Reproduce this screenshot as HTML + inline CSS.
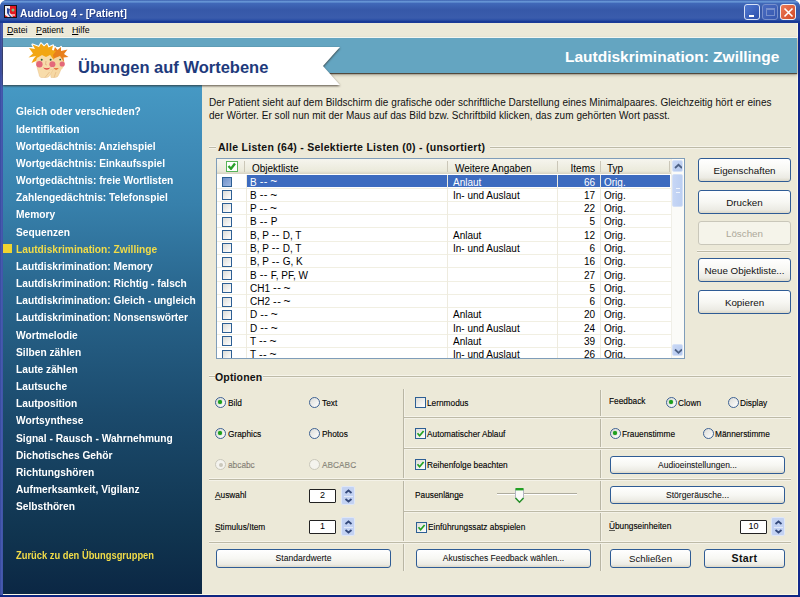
<!DOCTYPE html>
<html><head><meta charset="utf-8">
<style>
*{box-sizing:border-box;margin:0;padding:0}
html,body{width:800px;height:597px;overflow:hidden;background:#fff}
body{position:relative;font-family:"Liberation Sans",sans-serif;font-size:10px;color:#000}
.a{position:absolute;white-space:nowrap}
#frame{left:0;top:0;width:800px;height:597px;background:#1a44ae;border-radius:7px 7px 0 0}
#title{left:0;top:0;width:800px;height:23px;border-radius:7px 7px 0 0;background:linear-gradient(#3a5fae 0,#6b9bd9 1.7px,#4068b8 3.5px,#3658a8 10px,#3a5cac 18px,#2c50a6 20px,#183a96 21.5px,#1a3a98 23px)}
#ttext{left:19.5px;top:7px;font-weight:bold;font-size:11px;color:#fff;text-shadow:1px 1px 0 rgba(20,40,110,.7);transform:scaleX(0.935);transform-origin:0 0}
#client{left:3px;top:23px;width:794.5px;height:572px;background:#ece9d8;border-right:1px solid #fbf8e4;border-bottom:1.5px solid #fbf8e4}
.mi{top:24.6px;font-size:8.8px;color:#000}
.mi u{text-decoration:underline;text-underline-offset:1px;text-decoration-skip-ink:none}
.bar{left:3px;top:37px;width:794px;height:36px;background:#64a5c1;border-top:1px solid #f4f6f0;box-shadow:0 1px 1px rgba(50,40,30,.75),0 2px 3px rgba(50,40,30,.35)}
.nav{left:3px;top:85px;width:199px;height:509px;background:linear-gradient(#4699c4 0,#3f8cb8 60px,#3780ab 120px,#2a6890 200px,#1b4a6c 330px,#10344f 450px,#0b2744 509px)}
.nv{left:15.5px;font-weight:bold;font-size:11.5px;color:#fff;transform:scaleX(0.888);transform-origin:0 0;line-height:14px}
.gl{height:3px;margin-top:-1px;border-top:1px solid #f6f4ea;border-bottom:1px solid #f4f2e8;background:#bdbaa7}
.vl{width:2px;background:#b9b6a4;border-right:1px solid #f3f1e6}
.btn{height:19px;border:1px solid #2f5c95;color:#111;border-radius:3px;background:linear-gradient(#fff 0,#f7f7f3 50%,#ecebe4 85%,#dcd8c8 100%);text-align:center;line-height:17px;font-size:10px}
.cb{width:11px;height:11px;border:1px solid #2d5f94;background:linear-gradient(135deg,#dcdcd7 0,#fff 100%)}
.rb{width:11px;height:11px;border:1.4px solid #3f6394;border-radius:50%;background:linear-gradient(135deg,#dcdcd7 0,#fff 100%)}
.rb.on::after{content:"";position:absolute;left:2.3px;top:2.3px;width:4px;height:4px;border-radius:50%;background:#1f9f1f;box-shadow:0 0 1px #2a2}
.lbl u{text-decoration:underline;text-decoration-skip-ink:none;text-underline-offset:1px;text-decoration-thickness:1px}
.lbl{font-size:8.3px;line-height:12px;color:#000;-webkit-text-stroke:0.2px rgba(0,0,0,.6)}
.row{height:13px;line-height:13px;font-size:10px;margin-top:0.7px}
.dd{font-size:11px;letter-spacing:0.4px;margin-left:0.3px;position:relative;top:-0.6px}
.tl{font-size:12px;position:relative;top:-0.2px;margin-left:-0.5px}
</style></head><body>
<div id="frame" class="a"></div>
<div class="a" style="left:0;top:20px;width:2.6px;height:577px;background:linear-gradient(90deg,#34489e,#4a5cb0 60%,#3a52a6)"></div>
<div class="a" style="left:797.5px;top:20px;width:2.5px;height:577px;background:#12298c"></div>
<div class="a" style="left:0;top:594.5px;width:800px;height:3px;background:#0e2682"></div>
<div id="title" class="a">
<svg class="a" style="left:4px;top:5px" width="13" height="13"><rect x="0.5" y="0.5" width="12" height="12" fill="#f2f0f4" stroke="#151520"/><path d="M6 1H12V12H9L6 8Z" fill="#e41820"/><path d="M1 10L4 12H1Z" fill="#e41820"/><path d="M3 3L6 4L5 9L8 12H6L3 8Z" fill="#3048a0"/><circle cx="9" cy="5" r="1.5" fill="#80c080"/><path d="M7 10H11" stroke="#f4f4f4" stroke-width="1.2"/></svg>
<div id="ttext" class="a">AudioLog 4 - [Patient]</div>
<div class="a" style="left:744px;top:4px;width:16px;height:16px;border:1px solid #d8e2f6;border-radius:3px;background:linear-gradient(135deg,#5078d0,#2c50ac)"><div class="a" style="left:3.5px;top:9.5px;width:5.5px;height:2.5px;background:#fff"></div></div>
<div class="a" style="left:762px;top:4px;width:16px;height:16px;border:1px solid #7890cc;border-radius:3px;background:linear-gradient(135deg,#4a6cc0,#3658b0)"><div class="a" style="left:3px;top:3px;width:9px;height:8px;border:1px solid #7890cc;border-top-width:2px"></div></div>
<div class="a" style="left:780px;top:4px;width:16px;height:16px;border:1px solid #f0f0f4;border-radius:3px;background:linear-gradient(135deg,#ec7a58,#d24a26)"><svg class="a" style="left:2px;top:2px" width="11" height="11"><path d="M1.5 1.5L9.5 9.5M9.5 1.5L1.5 9.5" stroke="#fff" stroke-width="1.6"/></svg></div>
</div>
<div id="client" class="a"></div>
<div class="a mi" style="left:7px"><u>D</u>atei</div>
<div class="a mi" style="left:36px"><u>P</u>atient</div>
<div class="a mi" style="left:72px"><u>H</u>ilfe</div>
<div class="a bar"></div>
<div class="a nav"></div>
<svg class="a" style="left:3px;top:45px;filter:drop-shadow(0 1px 1.2px rgba(40,30,20,.75))" width="350" height="48"><polygon points="0,2 337,2 320,21 337,40 0,40" fill="#fff"/></svg>
<svg class="a" style="left:20px;top:38px" width="56" height="48" viewBox="20 38 56 48"><g stroke="#fff" stroke-width="2.2" stroke-linejoin="round" fill="#fff"><path d="M53 53 L55 47 L57.5 50 L61 47 L61 51 L67.5 49.5 L64 54 L68.5 57 L63.5 57.5 L64 62 L52 60Z"/><path d="M36 56 L28.5 57.5 L33 53.5 L29 48 L35 49 L32.5 44.5 L39 47 L41 43.5 L44 46.5 L47 44 L48.5 47.5 L53 45.5 L52 50 L56 51 L53 55 L54 60 L36 61 L31.5 63 L33.5 59Z"/></g><path d="M50 68 Q57 72 62 67 L59 74 Q58 77.5 55 77.5 L51 77.5Z" fill="#f6d8a4" stroke="#e8c088" stroke-width="0.5"/><path d="M37 67 Q45 74 54 68 L50 75 Q49 77.5 46 77.5 L41 77.5 Q39 77 39 74Z" fill="#f8dcaa" stroke="#e8c088" stroke-width="0.5"/><ellipse cx="58" cy="62.5" rx="6.5" ry="8" fill="#f5d6a0"/><path d="M53 53 L55 47 L57.5 50 L61 47 L61 51 L67.5 49.5 L64 54 L68.5 57 L63.5 57.5 L64 62 L60 56 L55 58 L52 60Z" fill="#e8801c"/><circle cx="62.2" cy="64" r="2.6" fill="#e4687a"/><circle cx="60.2" cy="59.6" r="0.9" fill="#2a5a3a"/><path d="M53.5 67.8 Q56 71.5 58.8 68Q56 68.8 53.5 67.8Z" fill="#e25a20"/><ellipse cx="45" cy="62.5" rx="9.3" ry="9" fill="#f8dcaa"/><path d="M36 56 L28.5 57.5 L33 53.5 L29 48 L35 49 L32.5 44.5 L39 47 L41 43.5 L44 46.5 L47 44 L48.5 47.5 L53 45.5 L52 50 L56 51 L53 55 L54 60 L50 55 L46 57 L42 55 L37 58 L36 61 L31.5 63 L33.5 59Z" fill="#f2a614"/><circle cx="39.4" cy="64.2" r="3.2" fill="#e4687a"/><circle cx="52.4" cy="64.2" r="3" fill="#e4687a"/><circle cx="41.7" cy="59.8" r="1" fill="#2a5a3a"/><circle cx="50.6" cy="59.8" r="1" fill="#2a5a3a"/><path d="M43 67.5 Q46.8 72 50.5 67.5Q46.8 68.8 43 67.5Z" fill="#e04848"/><path d="M46 61 L45.5 64.5 L47 65" stroke="#d8a070" stroke-width="0.6" fill="none"/><path d="M45 77.5 L49.5 72 M54 77.5 L56 72" stroke="#e0b078" stroke-width="0.6"/></svg>
<div class="a" style="left:78px;top:58px;font-weight:bold;font-size:16.5px;color:#1e3a7c">Übungen auf Wortebene</div>
<div class="a" style="left:565px;top:48px;font-weight:bold;font-size:15.5px;color:#fff">Lautdiskrimination: Zwillinge</div>
<div class="a nv" style="top:104.35px">Gleich oder verschieden?</div>
<div class="a nv" style="top:121.52px">Identifikation</div>
<div class="a nv" style="top:138.69px">Wortgedächtnis: Anziehspiel</div>
<div class="a nv" style="top:155.86px">Wortgedächtnis: Einkaufsspiel</div>
<div class="a nv" style="top:173.03px">Wortgedächtnis: freie Wortlisten</div>
<div class="a nv" style="top:190.20px">Zahlengedächtnis: Telefonspiel</div>
<div class="a nv" style="top:207.37px">Memory</div>
<div class="a nv" style="top:224.54px">Sequenzen</div>
<div class="a nv" style="top:241.71px;color:#f2dc48">Lautdiskrimination: Zwillinge</div>
<div class="a nv" style="top:258.88px">Lautdiskrimination: Memory</div>
<div class="a nv" style="top:276.05px">Lautdiskrimination: Richtig - falsch</div>
<div class="a nv" style="top:293.22px">Lautdiskrimination: Gleich - ungleich</div>
<div class="a nv" style="top:310.39px">Lautdiskrimination: Nonsenswörter</div>
<div class="a nv" style="top:327.56px">Wortmelodie</div>
<div class="a nv" style="top:344.73px">Silben zählen</div>
<div class="a nv" style="top:361.90px">Laute zählen</div>
<div class="a nv" style="top:379.07px">Lautsuche</div>
<div class="a nv" style="top:396.24px">Lautposition</div>
<div class="a nv" style="top:413.41px">Wortsynthese</div>
<div class="a nv" style="top:430.58px">Signal - Rausch - Wahrnehmung</div>
<div class="a nv" style="top:447.75px">Dichotisches Gehör</div>
<div class="a nv" style="top:464.92px">Richtungshören</div>
<div class="a nv" style="top:482.09px">Aufmerksamkeit, Vigilanz</div>
<div class="a nv" style="top:499.26px">Selbsthören</div>
<div class="a" style="left:3px;top:244px;width:9px;height:9px;background:#f0d430"></div>
<div class="a nv" style="top:548.90px;color:#f2dc48;font-size:10px;transform:scaleX(0.934)">Zurück zu den Übungsgruppen</div>
<div class="a" style="left:209px;top:97px;font-size:10px;line-height:12.6px;letter-spacing:0.04px;color:#111">Der Patient sieht auf dem Bildschirm die grafische oder schriftliche Darstellung eines Minimalpaares. Gleichzeitig hört er eines<br>der Wörter. Er soll nun mit der Maus auf das Bild bzw. Schriftbild klicken, das zum gehörten Wort passt.</div>
<div class="a gl" style="left:209px;top:147px;width:7px"></div>
<div class="a gl" style="left:490px;top:147px;width:301px"></div>
<div class="a" style="left:218px;top:140.7px;font-weight:bold;font-size:10.5px;line-height:13px;letter-spacing:0.27px;color:#111">Alle Listen (64) - Selektierte Listen (0) - (unsortiert)</div>
<div class="a" style="left:216px;top:158px;width:469px;height:201px;border:1px solid #7f9db9;background:#fff"></div>
<div class="a" style="left:217px;top:159px;width:454px;height:15px;background:linear-gradient(#f6f5ee 0,#ebeadb 80%,#d6d2c2 100%)"></div>
<div class="a" style="left:244px;top:161px;width:1px;height:11px;background:#cbc7b8"></div>
<div class="a" style="left:447px;top:161px;width:1px;height:11px;background:#cbc7b8"></div>
<div class="a" style="left:557px;top:161px;width:1px;height:11px;background:#cbc7b8"></div>
<div class="a" style="left:600px;top:161px;width:1px;height:11px;background:#cbc7b8"></div>
<div class="a" style="left:669px;top:161px;width:1px;height:11px;background:#cbc7b8"></div>
<div class="a" style="left:226px;top:161px;width:12px;height:11px;border:1.5px solid #58b458;background:#fff"><svg class="a" style="left:0;top:0" width="9" height="8"><path d="M1.5 4L4 6.8L8 1.5" stroke="#2aa02a" stroke-width="2.3" fill="none"/></svg></div>
<div class="a row" style="left:252px;top:161px">Objektliste</div>
<div class="a row" style="left:455px;top:161px">Weitere Angaben</div>
<div class="a row" style="left:557px;top:161px;width:38px;text-align:right">Items</div>
<div class="a row" style="left:607px;top:161px">Typ</div>
<div class="a" style="left:217px;top:175px;width:454px;height:183px;overflow:hidden">
<div class="a" style="left:0;top:12.60px;width:454px;height:1px;background:#f1efe2"></div>
<div class="a" style="left:30px;top:-0.10px;width:200px;height:12.4px;background:#3d6bbf"></div>
<div class="a" style="left:231px;top:-0.10px;width:109px;height:12.4px;background:#3d6bbf"></div>
<div class="a" style="left:341px;top:-0.10px;width:42px;height:12.4px;background:#3d6bbf"></div>
<div class="a" style="left:384px;top:-0.10px;width:69px;height:12.4px;background:#3d6bbf"></div>
<div class="a cb" style="left:5px;top:1.90px;width:10px;height:10px;background:linear-gradient(135deg,#6f90c8,#a0b8e0);"></div>
<div class="a row" style="left:33px;top:-0.10px;color:#fff;">B <span class="dd">--</span> <span class="tl">~</span></div>
<div class="a row" style="left:236px;top:-0.10px;color:#fff;">Anlaut</div>
<div class="a row" style="left:340px;top:-0.10px;width:38px;text-align:right;color:#fff;">66</div>
<div class="a row" style="left:387px;top:-0.10px;color:#fff;">Orig.</div>
<div class="a" style="left:0;top:25.89px;width:454px;height:1px;background:#f1efe2"></div>
<div class="a cb" style="left:5px;top:15.19px;width:10px;height:10px;"></div>
<div class="a row" style="left:33px;top:13.19px;">B <span class="dd">--</span> <span class="tl">~</span></div>
<div class="a row" style="left:236px;top:13.19px;">In- und Auslaut</div>
<div class="a row" style="left:340px;top:13.19px;width:38px;text-align:right;">17</div>
<div class="a row" style="left:387px;top:13.19px;">Orig.</div>
<div class="a" style="left:0;top:39.18px;width:454px;height:1px;background:#f1efe2"></div>
<div class="a cb" style="left:5px;top:28.48px;width:10px;height:10px;"></div>
<div class="a row" style="left:33px;top:26.48px;">P <span class="dd">--</span> <span class="tl">~</span></div>
<div class="a row" style="left:340px;top:26.48px;width:38px;text-align:right;">22</div>
<div class="a row" style="left:387px;top:26.48px;">Orig.</div>
<div class="a" style="left:0;top:52.47px;width:454px;height:1px;background:#f1efe2"></div>
<div class="a cb" style="left:5px;top:41.77px;width:10px;height:10px;"></div>
<div class="a row" style="left:33px;top:39.77px;">B <span class="dd">--</span> P</div>
<div class="a row" style="left:340px;top:39.77px;width:38px;text-align:right;">5</div>
<div class="a row" style="left:387px;top:39.77px;">Orig.</div>
<div class="a" style="left:0;top:65.76px;width:454px;height:1px;background:#f1efe2"></div>
<div class="a cb" style="left:5px;top:55.06px;width:10px;height:10px;"></div>
<div class="a row" style="left:33px;top:53.06px;">B, P <span class="dd">--</span> D, T</div>
<div class="a row" style="left:236px;top:53.06px;">Anlaut</div>
<div class="a row" style="left:340px;top:53.06px;width:38px;text-align:right;">12</div>
<div class="a row" style="left:387px;top:53.06px;">Orig.</div>
<div class="a" style="left:0;top:79.05px;width:454px;height:1px;background:#f1efe2"></div>
<div class="a cb" style="left:5px;top:68.35px;width:10px;height:10px;"></div>
<div class="a row" style="left:33px;top:66.35px;">B, P <span class="dd">--</span> D, T</div>
<div class="a row" style="left:236px;top:66.35px;">In- und Auslaut</div>
<div class="a row" style="left:340px;top:66.35px;width:38px;text-align:right;">6</div>
<div class="a row" style="left:387px;top:66.35px;">Orig.</div>
<div class="a" style="left:0;top:92.34px;width:454px;height:1px;background:#f1efe2"></div>
<div class="a cb" style="left:5px;top:81.64px;width:10px;height:10px;"></div>
<div class="a row" style="left:33px;top:79.64px;">B, P <span class="dd">--</span> G, K</div>
<div class="a row" style="left:340px;top:79.64px;width:38px;text-align:right;">16</div>
<div class="a row" style="left:387px;top:79.64px;">Orig.</div>
<div class="a" style="left:0;top:105.63px;width:454px;height:1px;background:#f1efe2"></div>
<div class="a cb" style="left:5px;top:94.93px;width:10px;height:10px;"></div>
<div class="a row" style="left:33px;top:92.93px;">B <span class="dd">--</span> F, PF, W</div>
<div class="a row" style="left:340px;top:92.93px;width:38px;text-align:right;">27</div>
<div class="a row" style="left:387px;top:92.93px;">Orig.</div>
<div class="a" style="left:0;top:118.92px;width:454px;height:1px;background:#f1efe2"></div>
<div class="a cb" style="left:5px;top:108.22px;width:10px;height:10px;"></div>
<div class="a row" style="left:33px;top:106.22px;">CH1 <span class="dd">--</span> <span class="tl">~</span></div>
<div class="a row" style="left:340px;top:106.22px;width:38px;text-align:right;">5</div>
<div class="a row" style="left:387px;top:106.22px;">Orig.</div>
<div class="a" style="left:0;top:132.21px;width:454px;height:1px;background:#f1efe2"></div>
<div class="a cb" style="left:5px;top:121.51px;width:10px;height:10px;"></div>
<div class="a row" style="left:33px;top:119.51px;">CH2 <span class="dd">--</span> <span class="tl">~</span></div>
<div class="a row" style="left:340px;top:119.51px;width:38px;text-align:right;">6</div>
<div class="a row" style="left:387px;top:119.51px;">Orig.</div>
<div class="a" style="left:0;top:145.50px;width:454px;height:1px;background:#f1efe2"></div>
<div class="a cb" style="left:5px;top:134.80px;width:10px;height:10px;"></div>
<div class="a row" style="left:33px;top:132.80px;">D <span class="dd">--</span> <span class="tl">~</span></div>
<div class="a row" style="left:236px;top:132.80px;">Anlaut</div>
<div class="a row" style="left:340px;top:132.80px;width:38px;text-align:right;">20</div>
<div class="a row" style="left:387px;top:132.80px;">Orig.</div>
<div class="a" style="left:0;top:158.79px;width:454px;height:1px;background:#f1efe2"></div>
<div class="a cb" style="left:5px;top:148.09px;width:10px;height:10px;"></div>
<div class="a row" style="left:33px;top:146.09px;">D <span class="dd">--</span> <span class="tl">~</span></div>
<div class="a row" style="left:236px;top:146.09px;">In- und Auslaut</div>
<div class="a row" style="left:340px;top:146.09px;width:38px;text-align:right;">24</div>
<div class="a row" style="left:387px;top:146.09px;">Orig.</div>
<div class="a" style="left:0;top:172.08px;width:454px;height:1px;background:#f1efe2"></div>
<div class="a cb" style="left:5px;top:161.38px;width:10px;height:10px;"></div>
<div class="a row" style="left:33px;top:159.38px;">T <span class="dd">--</span> <span class="tl">~</span></div>
<div class="a row" style="left:236px;top:159.38px;">Anlaut</div>
<div class="a row" style="left:340px;top:159.38px;width:38px;text-align:right;">39</div>
<div class="a row" style="left:387px;top:159.38px;">Orig.</div>
<div class="a" style="left:0;top:185.37px;width:454px;height:1px;background:#f1efe2"></div>
<div class="a cb" style="left:5px;top:174.67px;width:10px;height:10px;"></div>
<div class="a row" style="left:33px;top:172.67px;">T <span class="dd">--</span> <span class="tl">~</span></div>
<div class="a row" style="left:236px;top:172.67px;">In- und Auslaut</div>
<div class="a row" style="left:340px;top:172.67px;width:38px;text-align:right;">26</div>
<div class="a row" style="left:387px;top:172.67px;">Orig.</div>
<div class="a" style="left:29px;top:0;width:1px;height:183px;background:#eeebdf"></div>
<div class="a" style="left:230px;top:0;width:1px;height:183px;background:#eeebdf"></div>
<div class="a" style="left:340px;top:0;width:1px;height:183px;background:#eeebdf"></div>
<div class="a" style="left:383px;top:0;width:1px;height:183px;background:#eeebdf"></div>
</div>
<div class="a" style="left:671px;top:159px;width:13px;height:199px;background:#fbfbf8;border-left:1px solid #f0efe8"></div>
<div class="a" style="left:672px;top:160px;width:11px;height:12px;border-radius:2px;background:linear-gradient(135deg,#c9d8f5,#b4c8ee);border:1px solid #d6e2f7"><svg class="a" style="left:1px;top:2px" width="8" height="7"><path d="M1 5L4.5 1.8L8 5" stroke="#4d6185" stroke-width="1.8" fill="none"/></svg></div>
<div class="a" style="left:672px;top:173.5px;width:11px;height:33px;border-radius:2px;background:linear-gradient(90deg,#c6d6f5,#bccff2);border:1px solid #d4e0f6"><div class="a" style="left:3px;top:13px;width:4px;height:5px;border-top:1px solid #eef3fc;border-bottom:1px solid #eef3fc"></div></div>
<div class="a" style="left:672px;top:344px;width:11px;height:12px;border-radius:2px;background:linear-gradient(135deg,#c9d8f5,#b4c8ee);border:1px solid #d6e2f7"><svg class="a" style="left:1px;top:3px" width="8" height="7"><path d="M1 1.5L4.5 4.8L8 1.5" stroke="#4d6185" stroke-width="1.8" fill="none"/></svg></div>
<div class="a btn" style="left:698px;top:158px;width:93px;height:24px;line-height:23.5px;font-size:9.8px;">Eigenschaften</div>
<div class="a btn" style="left:698px;top:190px;width:93px;height:24px;line-height:23.5px;font-size:9.8px;">Drucken</div>
<div class="a btn" style="left:698px;top:221px;width:93px;height:24px;line-height:23.5px;font-size:9.8px;border-color:#c9c7ba;color:#aca899;background:#f5f4ea;">Löschen</div>
<div class="a btn" style="left:698px;top:258px;width:93px;height:24px;line-height:23.5px;font-size:9.8px;">Neue Objektliste...</div>
<div class="a btn" style="left:698px;top:290px;width:93px;height:24px;line-height:23.5px;font-size:9.8px;">Kopieren</div>
<div class="a gl" style="left:697px;top:251px;width:94px"></div>
<div class="a gl" style="left:209px;top:376px;width:6px"></div>
<div class="a gl" style="left:263px;top:376px;width:528px"></div>
<div class="a" style="left:215px;top:371px;font-weight:bold;font-size:10.5px;letter-spacing:0.15px;line-height:13px;color:#111">Optionen</div>
<div class="a vl" style="left:403px;top:389px;height:182px"></div>
<div class="a vl" style="left:600px;top:390px;height:181px"></div>
<div class="a gl" style="left:404px;top:417px;width:387px"></div>
<div class="a gl" style="left:404px;top:448px;width:387px"></div>
<div class="a gl" style="left:404px;top:511px;width:387px"></div>
<div class="a gl" style="left:209px;top:479px;width:582px"></div>
<div class="a gl" style="left:209px;top:542px;width:582px"></div>
<div class="a rb on" style="left:215.0px;top:396.9px;"></div>
<div class="a lbl" style="left:228.0px;top:396.8px">Bild</div>
<div class="a rb" style="left:309.0px;top:396.9px;"></div>
<div class="a lbl" style="left:322.0px;top:396.8px">Text</div>
<div class="a rb on" style="left:215.0px;top:428.0px;"></div>
<div class="a lbl" style="left:228.0px;top:427.9px">Graphics</div>
<div class="a rb" style="left:309.0px;top:428.0px;"></div>
<div class="a lbl" style="left:322.0px;top:427.9px">Photos</div>
<div class="a rb" style="left:215.0px;top:459.1px;border-color:#cac8bb;background:#f4f3ee;"><div class="a" style="left:2.5px;top:2.5px;width:4px;height:4px;border-radius:50%;background:#cac8bb"></div></div>
<div class="a lbl" style="left:228.0px;top:459.0px;color:#aca899">abcabc</div>
<div class="a rb" style="left:309.0px;top:459.1px;border-color:#cac8bb;background:#f4f3ee;"></div>
<div class="a lbl" style="left:322.0px;top:459.0px;color:#aca899">ABCABC</div>
<div class="a cb" style="left:415.0px;top:396.5px"></div>
<div class="a lbl" style="left:427.0px;top:396.8px">Lernmodus</div>
<div class="a cb" style="left:415.0px;top:428.0px"><svg class="a" style="left:0;top:0" width="9" height="9"><path d="M1.5 4.3L3.6 6.8L7.6 2" stroke="#21a121" stroke-width="1.7" fill="none"/></svg></div>
<div class="a lbl" style="left:427.0px;top:427.9px">Automatischer Ablauf</div>
<div class="a cb" style="left:415.0px;top:459.1px"><svg class="a" style="left:0;top:0" width="9" height="9"><path d="M1.5 4.3L3.6 6.8L7.6 2" stroke="#21a121" stroke-width="1.7" fill="none"/></svg></div>
<div class="a lbl" style="left:427.0px;top:459.0px">Reihenfolge beachten</div>
<div class="a lbl" style="left:215.0px;top:489.4px"><u>A</u>uswahl</div>
<div class="a lbl" style="left:215.0px;top:520.7px"><u>S</u>timulus/Item</div>
<div class="a lbl" style="left:415.0px;top:489.4px">Pausenlän<u>g</u>e</div>
<div class="a cb" style="left:416.0px;top:521.5px"><svg class="a" style="left:0;top:0" width="9" height="9"><path d="M1.5 4.3L3.6 6.8L7.6 2" stroke="#21a121" stroke-width="1.7" fill="none"/></svg></div>
<div class="a lbl" style="left:428.0px;top:521.4px">Einführungssatz abspielen</div>
<div class="a lbl" style="left:609.0px;top:394.9px">Feedback</div>
<div class="a rb on" style="left:666.0px;top:396.9px;"></div>
<div class="a lbl" style="left:678.0px;top:396.8px">Clown</div>
<div class="a rb" style="left:728.0px;top:396.9px;"></div>
<div class="a lbl" style="left:740.0px;top:396.8px">Display</div>
<div class="a rb on" style="left:609.5px;top:428.0px;"></div>
<div class="a lbl" style="left:622.0px;top:427.9px">Frauenstimme</div>
<div class="a rb" style="left:703.0px;top:428.0px;"></div>
<div class="a lbl" style="left:715.0px;top:427.9px">Männerstimme</div>
<div class="a lbl" style="left:609.0px;top:520.4px"><u>Ü</u>bungseinheiten</div>
<div class="a" style="left:309px;top:489px;width:27px;height:14px;border:1.5px solid #222;border-radius:1px;background:#fff;text-align:center;font-size:9px;line-height:11px">2</div>
<div class="a" style="left:341px;top:486px;width:14px;height:19px;border-radius:2px;background:#c3d2f2;border:1px solid #dfe7f8"><svg class="a" style="left:2px;top:1px" width="9" height="16"><path d="M1.5 5L4.5 2.5L7.5 5M1.5 11L4.5 13.5L7.5 11" stroke="#34497a" stroke-width="1.8" fill="none"/><path d="M0 8.5H9" stroke="#e3eaf8" stroke-width="1"/></svg></div>
<div class="a" style="left:309px;top:520px;width:27px;height:14px;border:1.5px solid #222;border-radius:1px;background:#fff;text-align:center;font-size:9px;line-height:11px">1</div>
<div class="a" style="left:341px;top:517px;width:14px;height:19px;border-radius:2px;background:#c3d2f2;border:1px solid #dfe7f8"><svg class="a" style="left:2px;top:1px" width="9" height="16"><path d="M1.5 5L4.5 2.5L7.5 5M1.5 11L4.5 13.5L7.5 11" stroke="#34497a" stroke-width="1.8" fill="none"/><path d="M0 8.5H9" stroke="#e3eaf8" stroke-width="1"/></svg></div>
<div class="a" style="left:740px;top:520px;width:27px;height:14px;border:1.5px solid #222;border-radius:1px;background:#fff;text-align:center;font-size:9px;line-height:11px">10</div>
<div class="a" style="left:771px;top:517px;width:14px;height:19px;border-radius:2px;background:#c3d2f2;border:1px solid #dfe7f8"><svg class="a" style="left:2px;top:1px" width="9" height="16"><path d="M1.5 5L4.5 2.5L7.5 5M1.5 11L4.5 13.5L7.5 11" stroke="#34497a" stroke-width="1.8" fill="none"/><path d="M0 8.5H9" stroke="#e3eaf8" stroke-width="1"/></svg></div>
<div class="a" style="left:497px;top:493px;width:80px;height:2px;border-top:1px solid #aeac9e;border-bottom:1px solid #fff"></div>
<svg class="a" style="left:514px;top:487px" width="11" height="18"><path d="M1.5 2H9.5V11.5L5.5 15.5L1.5 11.5Z" fill="#fbfbf9" stroke="#b4b6c4" stroke-width="1"/><path d="M1.5 2.2H9.5" stroke="#22a022" stroke-width="2.4"/><path d="M1.5 11L5.5 15.2L9.5 11" stroke="#2a902a" stroke-width="1.6" fill="none"/></svg>
<div class="a btn" style="left:610px;top:456px;width:175px;height:18px;line-height:16px;font-size:8.5px;-webkit-text-stroke:0.12px rgba(0,0,0,.5)">Audioeinstellungen...</div>
<div class="a btn" style="left:610px;top:486px;width:175px;height:18px;line-height:16px;font-size:8.6px;-webkit-text-stroke:0.12px rgba(0,0,0,.5)">Störgeräusche...</div>
<div class="a btn" style="left:216px;top:549px;width:175px;height:19px;font-size:8.6px;-webkit-text-stroke:0.12px rgba(0,0,0,.5)">Standardwerte</div>
<div class="a btn" style="left:416px;top:549px;width:175px;height:19px;font-size:8.5px;-webkit-text-stroke:0.12px rgba(0,0,0,.5)">Akustisches Feedback wählen...</div>
<div class="a btn" style="left:610px;top:549px;width:81px;height:19px;font-size:9.7px">Schließen</div>
<div class="a btn" style="left:704px;top:549px;width:81px;height:19px;font-weight:bold;font-size:10.6px;letter-spacing:0.35px">Start</div>
</body></html>
